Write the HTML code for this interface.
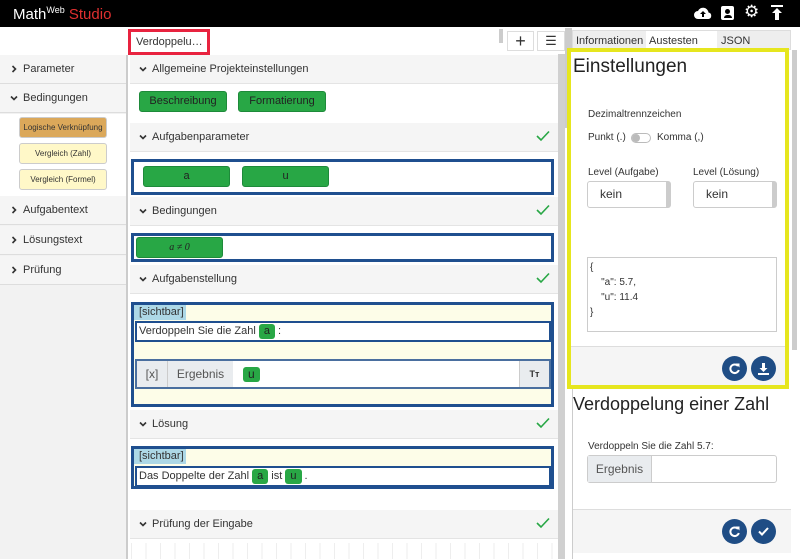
<!DOCTYPE html>
<html><head><meta charset="utf-8"><style>
*{box-sizing:border-box;margin:0;padding:0}
body{width:800px;height:559px;overflow:hidden;background:#fff;font-family:"Liberation Sans",sans-serif;font-size:11px;color:#333;position:relative}
.a{position:absolute}
.hdr{left:0;top:0;width:800px;height:27px;background:#000}
.side{left:0;top:55px;width:128px;height:504px;background:#f2f2f2;border-right:2px solid #ccc}
.srow{position:absolute;left:0;width:126px;height:29px;border-bottom:1px solid #ddd;background:#f5f5f5;font-size:11px;line-height:29px;padding-left:10px;color:#333}
.cv{display:inline-block;width:8px;height:8px;margin-right:5px;vertical-align:-1px}
.sub{position:absolute;left:19px;width:88px;height:21px;border:1px solid #ccc;border-radius:3px;font-size:8px;text-align:center;line-height:19px;background:#fff8c8}
.sh{position:absolute;left:130px;width:428px;height:29px;background:#f5f5f5;border-bottom:1px solid #e4e4e4;font-size:11px;line-height:28px;padding-left:9px}
.ok{position:absolute;right:8px;top:7px;width:14px;height:12px}
.gb{position:absolute;height:21px;background:#28a745;border:1px solid #1e8a3a;border-radius:3px;color:#222;text-align:center;line-height:19px;font-size:11px}
.bx{position:absolute;left:131px;width:423px;border:3px solid #1f4f8f}
.chip{display:inline-block;background:#28a745;border-radius:3px;padding:0 5px;line-height:15px;color:#222}
.circ{position:absolute;width:25px;height:25px;border-radius:50%;background:#1f4d85}
.circ svg{position:absolute;left:6px;top:6px;width:13px;height:13px}
</style></head><body>
<svg width="0" height="0" style="position:absolute"><defs>
<symbol id="down" viewBox="0 0 8 8"><path d="M1 2.5L4 5.5L7 2.5" fill="none" stroke="#333" stroke-width="1.6"/></symbol>
<symbol id="right" viewBox="0 0 8 8"><path d="M2.5 1L5.5 4L2.5 7" fill="none" stroke="#333" stroke-width="1.6"/></symbol>
<symbol id="chk" viewBox="0 0 14 12"><path d="M1 6L5 10L13 1.5" fill="none" stroke="#28a745" stroke-width="1.6"/></symbol>
</defs></svg>
<div class="a hdr"></div>
<div class="a" style="left:13px;top:5px;color:#fff;font-size:15px">Math<sup style="font-size:9px">Web</sup> <span style="color:#e03030">Studio</span></div>
<svg class="a" style="left:694px;top:6px" width="18" height="14" viewBox="0 0 18 14"><path d="M4 13a4 4 0 0 1 0-8a5.5 5.5 0 0 1 10.5 1.5a3.3 3.3 0 0 1 0 6.5z" fill="#fff"/><path d="M9 5l-3 3h2v3h2v-3h2z" fill="#000"/></svg>
<div class="a" style="left:721px;top:6px;width:13px;height:14px;background:#fff;border-radius:2px"><div style="margin:3px auto 0;width:5px;height:5px;border-radius:50%;background:#000"></div><div style="margin:1px auto 0;width:8px;height:3px;border-radius:3px 3px 0 0;background:#000"></div></div>
<div class="a" style="left:744px;top:2px;color:#fff;font-size:17px">⚙</div>
<svg class="a" style="left:771px;top:5px" width="12" height="15" viewBox="0 0 12 15"><rect x="0" y="0" width="12" height="2" fill="#fff"/><path d="M6 3L1 8h3v7h4V8h3z" fill="#fff"/></svg>

<div class="a side"></div>
<div class="srow" style="top:55px"><svg class="cv"><use href="#right"/></svg>Parameter</div>
<div class="srow" style="top:84px"><svg class="cv"><use href="#down"/></svg>Bedingungen</div>
<div class="a" style="left:0;top:114px;width:126px;height:82px;background:#fff"></div>
<div class="sub" style="top:117px;background:#dba85a">Logische Verknüpfung</div>
<div class="sub" style="top:143px">Vergleich (Zahl)</div>
<div class="sub" style="top:169px">Vergleich (Formel)</div>
<div class="srow" style="top:196px"><svg class="cv"><use href="#right"/></svg>Aufgabentext</div>
<div class="srow" style="top:226px"><svg class="cv"><use href="#right"/></svg>Lösungstext</div>
<div class="srow" style="top:256px"><svg class="cv"><use href="#right"/></svg>Prüfung</div>

<div class="a" style="left:128px;top:29px;width:82px;height:26px;border:3px solid #e8233f;background:#fff;font-size:11px;line-height:20px;padding-left:5px">Verdoppelu…</div>
<div class="a" style="left:499px;top:29px;width:4px;height:14px;background:#ccc"></div>
<div class="a" style="left:507px;top:31px;width:27px;height:20px;border:1px solid #ddd;text-align:center;font-size:18px;line-height:18px">+</div>
<div class="a" style="left:537px;top:31px;width:28px;height:20px;border:1px solid #ddd;text-align:center;font-size:13px;line-height:18px">☰</div>
<div class="a" style="left:558px;top:54px;width:7px;height:505px;background:#d0d0d0"></div>

<div class="sh" style="top:55px"><svg class="cv"><use href="#down"/></svg>Allgemeine Projekteinstellungen</div>
<div class="gb" style="left:139px;top:91px;width:88px">Beschreibung</div>
<div class="gb" style="left:238px;top:91px;width:88px">Formatierung</div>
<div class="sh" style="top:123px"><svg class="cv"><use href="#down"/></svg>Aufgabenparameter<svg class="ok"><use href="#chk"/></svg></div>
<div class="bx" style="top:159px;height:36px"></div>
<div class="gb" style="left:143px;top:166px;width:87px">a</div>
<div class="gb" style="left:242px;top:166px;width:87px">u</div>
<div class="sh" style="top:197px"><svg class="cv"><use href="#down"/></svg>Bedingungen<svg class="ok"><use href="#chk"/></svg></div>
<div class="bx" style="top:233px;height:29px"></div>
<div class="gb" style="left:136px;top:237px;width:87px;font-family:'Liberation Serif',serif;font-style:italic;font-size:10px">a ≠ 0</div>
<div class="sh" style="top:265px"><svg class="cv"><use href="#down"/></svg>Aufgabenstellung<svg class="ok"><use href="#chk"/></svg></div>
<div class="bx" style="top:302px;height:105px;background:#fdfde8"></div>
<div class="a" style="left:134px;top:305px;width:52px;height:15px;background:#add8e6;line-height:15px;padding-left:5px">[sichtbar]</div>
<div class="a" style="left:135px;top:321px;width:416px;height:21px;border:2px solid #1f4f8f;background:#fff;line-height:17px;padding-left:2px">Verdoppeln Sie die Zahl <span class="chip">a</span> :</div>
<div class="a" style="left:135px;top:359px;width:416px;height:30px;border:2px solid #4a6f9f;background:#fff;display:flex;font-size:12px;line-height:26px">
<div style="width:31px;background:#e9ecef;text-align:center;color:#555;border-right:1px solid #ccc">[x]</div>
<div style="width:65px;background:#e9ecef;text-align:center;color:#555">Ergebnis</div>
<div style="flex:1;padding-left:10px"><span class="chip">u</span></div>
<div style="width:30px;background:#e9ecef;text-align:center;font-size:9px;font-weight:bold;border-left:1px solid #ccc">Tт</div></div>
<div class="sh" style="top:410px"><svg class="cv"><use href="#down"/></svg>Lösung<svg class="ok"><use href="#chk"/></svg></div>
<div class="bx" style="top:446px;height:43px;background:#fdfde8"></div>
<div class="a" style="left:134px;top:449px;width:52px;height:15px;background:#add8e6;line-height:15px;padding-left:5px">[sichtbar]</div>
<div class="a" style="left:135px;top:466px;width:416px;height:21px;border:2px solid #1f4f8f;background:#fff;line-height:17px;padding-left:2px">Das Doppelte der Zahl <span class="chip">a</span> ist <span class="chip">u</span> .</div>
<div class="sh" style="top:510px"><svg class="cv"><use href="#down"/></svg>Prüfung der Eingabe<svg class="ok"><use href="#chk"/></svg></div>
<div class="a" style="left:131px;top:543px;width:424px;height:16px;background-image:linear-gradient(90deg,#eee 1px,transparent 1px);background-size:14.5px 100%"></div>

<div class="a" style="left:565px;top:28px;width:7px;height:100px;background:#ccc"></div>
<div class="a" style="left:572px;top:30px;width:219px;height:20px;background:#eee;border:1px solid #ddd"></div>
<div class="a" style="left:576px;top:35px;font-size:11px">Informationen</div>
<div class="a" style="left:646px;top:31px;width:71px;height:18px;background:#fff"></div>
<div class="a" style="left:649px;top:35px;font-size:11px">Austesten</div>
<div class="a" style="left:721px;top:35px;font-size:11px">JSON</div>
<div class="a" style="left:572px;top:50px;width:1px;height:509px;background:#ccc"></div>
<div class="a" style="left:792px;top:50px;width:5px;height:300px;background:#ccc"></div>
<div class="a" style="left:567px;top:48px;width:222px;height:341px;border:4px solid #e6e61e;background:#fff"></div>
<div class="a" style="left:571px;top:346px;width:214px;height:39px;background:#f5f5f5;border-top:1px solid #ddd"></div>
<div class="a" style="left:573px;top:56px;font-size:19px;color:#222">Einstellungen</div>
<div class="a" style="left:588px;top:109px;font-size:10px">Dezimaltrennzeichen</div>
<div class="a" style="left:588px;top:132px;font-size:10px">Punkt (.)</div>
<div class="a" style="left:631px;top:133px;width:20px;height:10px;border:1px solid #bbb;border-radius:5px"><div style="width:8px;height:8px;border-radius:50%;background:#bbb"></div></div>
<div class="a" style="left:657px;top:132px;font-size:10px">Komma (,)</div>
<div class="a" style="left:588px;top:167px;font-size:10px">Level (Aufgabe)</div>
<div class="a" style="left:693px;top:167px;font-size:10px">Level (Lösung)</div>
<div class="a" style="left:587px;top:181px;width:84px;height:27px;border:1px solid #ccc;border-radius:3px;padding-left:12px;line-height:25px;font-size:12px">kein<span style="position:absolute;right:0;top:0;width:4px;height:25px;background:#ccc"></span></div>
<div class="a" style="left:693px;top:181px;width:84px;height:27px;border:1px solid #ccc;border-radius:3px;padding-left:12px;line-height:25px;font-size:12px">kein<span style="position:absolute;right:0;top:0;width:4px;height:25px;background:#ccc"></span></div>
<div class="a" style="left:587px;top:257px;width:190px;height:75px;border:1px solid #ccc;font-size:10px;line-height:15px;padding:2px 2px">{<br>&nbsp;&nbsp;&nbsp;&nbsp;"a": 5.7,<br>&nbsp;&nbsp;&nbsp;&nbsp;"u": 11.4<br>}</div>
<div class="circ" style="left:722px;top:356px"><svg viewBox="0 0 13 13"><path d="M10 4A4.3 4.3 0 1 0 10.8 8" fill="none" stroke="#fff" stroke-width="2"/><path d="M7.5 1.5L11.5 1.5L11.5 5.5z" fill="#fff"/></svg></div>
<div class="circ" style="left:751px;top:356px"><svg viewBox="0 0 13 13"><path d="M5 1h3v5h2.5L6.5 10L2.5 6H5z" fill="#fff"/><rect x="1" y="11" width="11" height="2" fill="#fff"/></svg></div>
<div class="a" style="left:573px;top:394px;font-size:18px;color:#222">Verdoppelung einer Zahl</div>
<div class="a" style="left:588px;top:441px;font-size:10px">Verdoppeln Sie die Zahl 5.7:</div>
<div class="a" style="left:587px;top:455px;width:190px;height:28px;border:1px solid #ccc;border-radius:3px;display:flex;font-size:12px;line-height:26px"><div style="width:64px;background:#e9ecef;text-align:center;color:#555;border-right:1px solid #ccc">Ergebnis</div></div>
<div class="a" style="left:573px;top:509px;width:218px;height:44px;background:#f5f5f5;border-top:1px solid #ddd"></div>
<div class="circ" style="left:722px;top:519px"><svg viewBox="0 0 13 13"><path d="M10 4A4.3 4.3 0 1 0 10.8 8" fill="none" stroke="#fff" stroke-width="2"/><path d="M7.5 1.5L11.5 1.5L11.5 5.5z" fill="#fff"/></svg></div>
<div class="circ" style="left:751px;top:519px"><svg viewBox="0 0 13 13"><path d="M2 6.5L5 9.5L11 3" fill="none" stroke="#fff" stroke-width="2"/></svg></div>
</body></html>
